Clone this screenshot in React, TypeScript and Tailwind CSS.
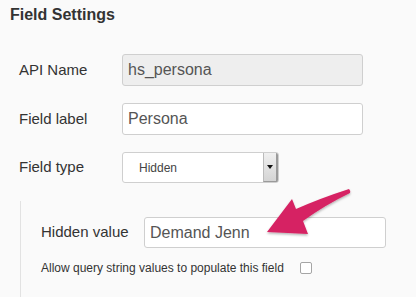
import React from 'react';

type RowProps = {
  label: string;
  children: React.ReactNode;
};

function Row({ label, children }: RowProps) {
  return (
    <div className="flex items-center">
      <label className="w-[103px] shrink-0 text-[15px] text-[#333]">{label}</label>
      {children}
    </div>
  );
}

function Arrow() {
  return (
    <svg
      className="absolute left-0 top-0 pointer-events-none"
      width="416"
      height="297"
      viewBox="0 0 416 297"
    >
      <defs>
        <filter id="arrow-shadow" x="-20%" y="-20%" width="140%" height="160%">
          <feDropShadow dx="0" dy="1.5" stdDeviation="1.2" floodColor="#000" floodOpacity="0.3" />
        </filter>
      </defs>
      <path
        d="M267 232 L292 199 L296 209 Q321 198 349 189 Q351 191 350 193 Q325 205 303 221 L308 234 Z"
        fill="#d62463"
        filter="url(#arrow-shadow)"
      />
    </svg>
  );
}

export default function App() {
  return (
    <div className="relative w-[416px] h-[297px] overflow-hidden bg-[#fafafa] font-['Liberation_Sans',Arial,sans-serif]">
      <h2 className="pl-[10px] pt-[4px] text-[16px] leading-[22px] font-bold text-[#333]">
        Field Settings
      </h2>

      <div className="mt-[28px] pl-[19px] flex flex-col gap-[17px]">
        <Row label="API Name">
          <input
            readOnly
            value="hs_persona"
            className="w-[241px] h-[32px] px-[5px] rounded-[3px] border border-[#cfcfcf] bg-[#eeeeee] text-[16px] text-[#555] outline-none"
          />
        </Row>
        <Row label="Field label">
          <input
            readOnly
            value="Persona"
            className="w-[241px] h-[32px] px-[5px] rounded-[3px] border border-[#cfcfcf] bg-white text-[16px] text-[#555] outline-none"
          />
        </Row>
        <Row label="Field type">
          <div className="flex w-[157px] h-[31px] rounded-[3px] border border-[#cfcfcf] bg-white overflow-hidden">
            <div className="flex-1 flex items-center pl-[16px] text-[12px] text-[#444]">Hidden</div>
            <div className="w-[15px] flex items-center justify-center border-l border-[#bbb] border-r-2 border-r-[#9a9a9a] border-b border-b-[#9a9a9a] bg-gradient-to-b from-[#f0f0f0] to-[#d4d4d4]">
              <svg width="6" height="4" viewBox="0 0 6 4">
                <path d="M0 0 H6 L3 4 Z" fill="#111" />
              </svg>
            </div>
          </div>
        </Row>
      </div>

      <div className="ml-[20px] mt-[18px] h-[100px] border-l border-[#e2e2e2] pl-[20px] pt-[16px]">
        <Row label="Hidden value">
          <input
            readOnly
            value="Demand Jenn"
            className="w-[242px] h-[31px] px-[5px] rounded-[3px] border border-[#cfcfcf] bg-white text-[16px] text-[#555] outline-none"
          />
        </Row>
        <div className="mt-[13px] flex items-center">
          <span className="text-[12px] leading-[14px] text-[#333]">
            Allow query string values to populate this field
          </span>
          <span className="ml-[16px] w-[12px] h-[12px] rounded-[2px] border border-[#a5a5a5] bg-white" />
        </div>
      </div>

      <Arrow />
    </div>
  );
}
